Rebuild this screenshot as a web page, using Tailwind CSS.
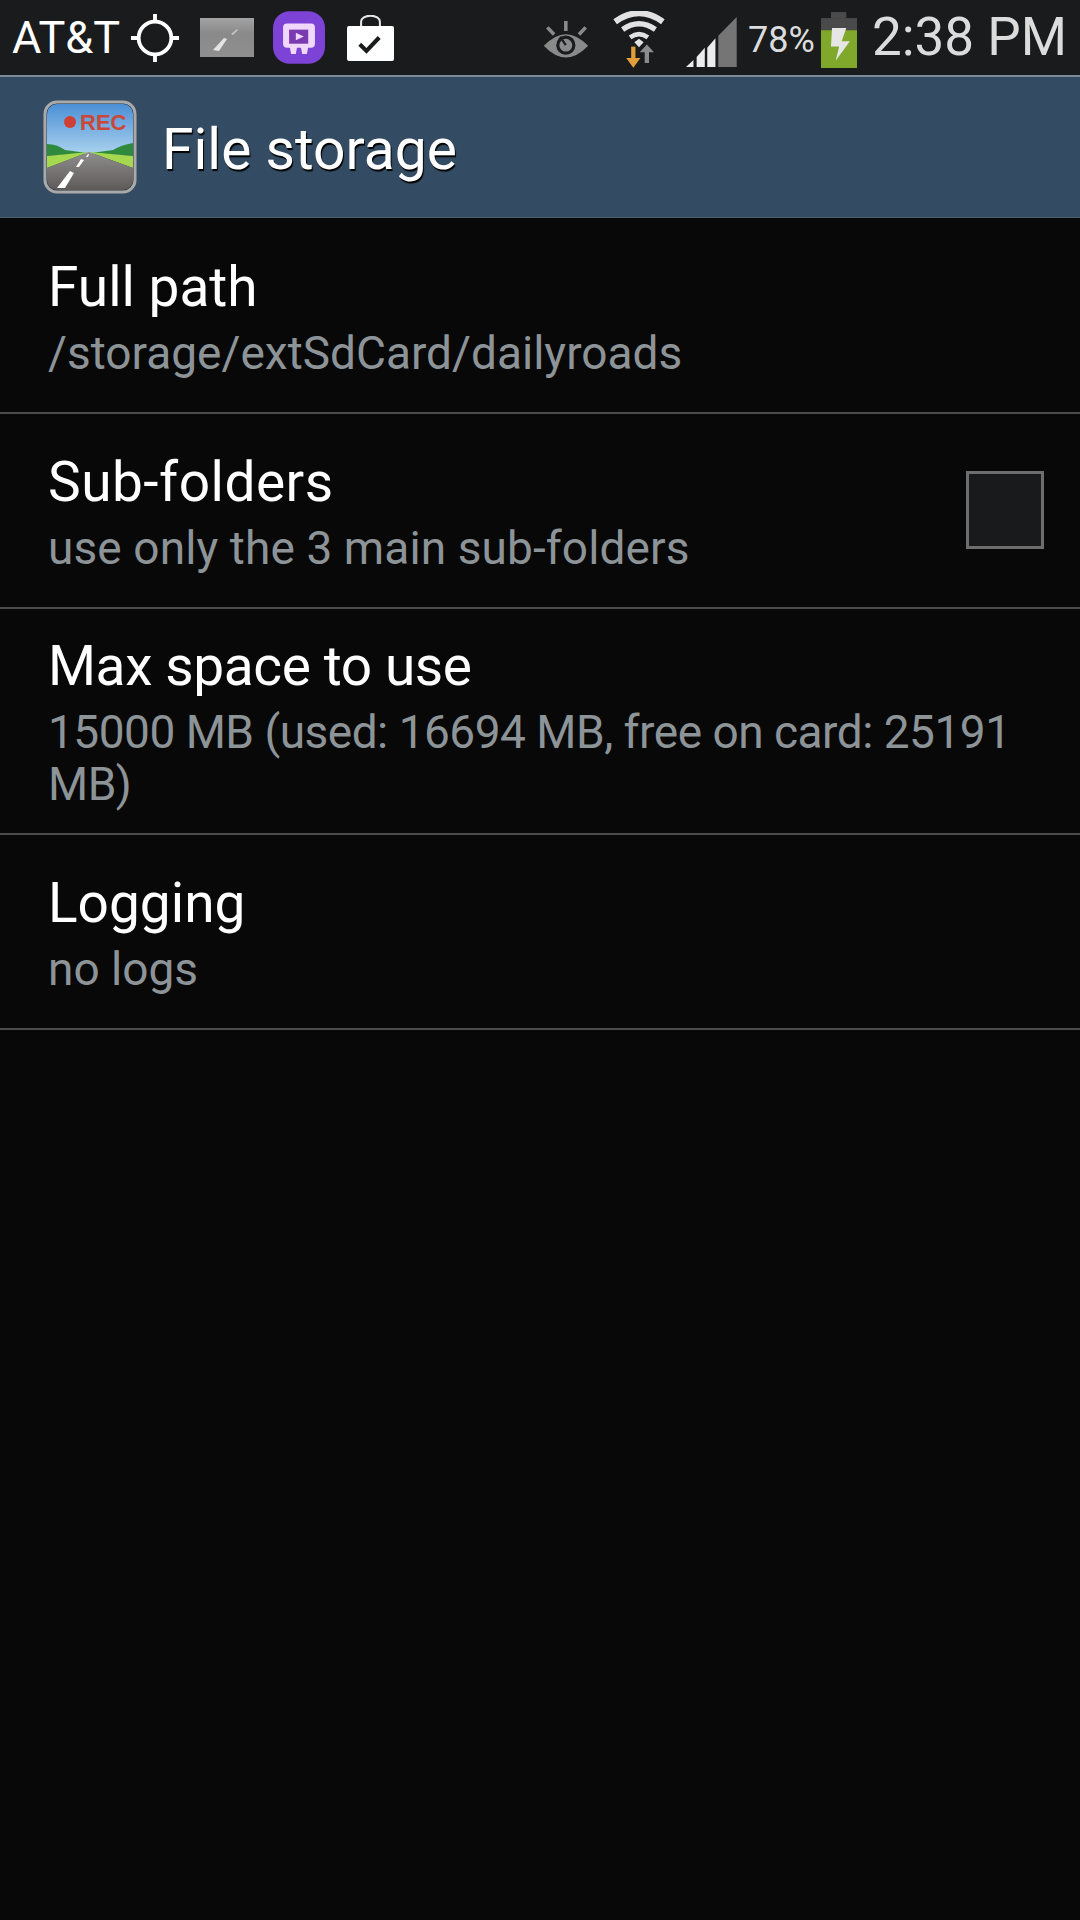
<!DOCTYPE html>
<html lang="en">

<head>
  <meta charset="UTF-8">
  <meta name="viewport" content="width=device-width, initial-scale=1.0">
  <title>File storage</title>
  <script src="https://cdn.jsdelivr.net/npm/@tailwindcss/browser@4"></script>
</head>

<body class="bg-[#080808] w-[1080px] h-[1920px] overflow-hidden font-['Roboto',sans-serif]">

  <!-- Status bar -->
  <div class="h-[75px] bg-[#1a1b1d] flex items-center">
    <span class="ml-[12px] w-[107px] text-[45px] leading-none text-white">AT&amp;T</span>
    <!-- GPS -->
    <svg class="ml-[11px]" width="50" height="50" viewBox="0 0 52 52" fill="none" stroke="#fff" stroke-width="4">
      <circle cx="26" cy="26" r="17" />
      <path d="M26 1v8M26 43v8M1 26h8M43 26h8" />
    </svg>
    <!-- Thumb -->
    <svg class="ml-[20px]" width="54" height="39" viewBox="0 0 54 39">
      <defs>
        <linearGradient id="thumb" x1="0" y1="0" x2="0" y2="1">
          <stop offset="0" stop-color="#a3a3a3" />
          <stop offset="0.4" stop-color="#8a8a8a" />
          <stop offset="1" stop-color="#8f8f8f" />
        </linearGradient>
      </defs>
      <rect width="54" height="39" fill="url(#thumb)" />
      <path d="M13 32 L24 20 L27 21 L19 33Z" fill="#e4e4e4" />
      <path d="M31 16 L37 11 L38 12 L33 17Z" fill="#c4c4c4" />
    </svg>
    <!-- Purple app -->
    <svg class="ml-[19px]" width="52" height="53" viewBox="820 33 155 157">
      <rect x="820" y="33" width="155" height="157" rx="50" fill="#7d42d6" />
      <rect x="850" y="70" width="95" height="72" rx="12" fill="#f0d8fa" />
      <rect x="868" y="88" width="57" height="42" fill="#7a3ab0" />
      <path d="M888 97l24 11.500-24 11.500z" fill="#f0d8fa" />
      <path d="M870 140h22l-4 21h-14zM903 140h22l-4 21h-14z" fill="#f0d8fa" />
    </svg>
    <!-- Shopping bag -->
    <svg class="ml-[22px]" width="47" height="46" viewBox="1040 35 140 137" fill="none">
      <path d="M1082 72V55a28 18 0 0 1 56 0v17" stroke="#e8e8e8" stroke-width="6" />
      <rect x="1040" y="68" width="140" height="104" rx="6" fill="#fff" />
      <path d="M1078 122l20 20 38-40" stroke="#1a1b1d" stroke-width="12" />
    </svg>

    <div class="ml-auto flex items-center h-full">
      <!-- Eye -->
      <svg width="46" height="38" viewBox="75 58 125 107" class="mr-[24px] mt-[5px]">
        <path d="M75 128 Q137 62 200 128 Q137 194 75 128Z" fill="#8a8a8a" />
        <circle cx="137" cy="126" r="27" fill="#1a1b1d" />
        <circle cx="137" cy="126" r="18" fill="#8a8a8a" />
        <path d="M137 126l-16-24" stroke="#1a1b1d" stroke-width="6" />
        <path d="M137 58v28M85 76l19 20M193 76l-19 20" stroke="#8a8a8a" stroke-width="10" />
      </svg>
      <!-- Wifi with arrows -->
      <svg width="52" height="57" viewBox="265 30 146 160" class="mr-[20px] mt-[3px]" fill="none">
        <path d="M271 60 Q338 12 405 60" stroke="#e2e2e2" stroke-width="17" />
        <path d="M292 82 Q338 50 384 82" stroke="#e2e2e2" stroke-width="15" />
        <path d="M313 104 Q338 86 363 104" stroke="#e2e2e2" stroke-width="13" />
        <path d="M325 118 L338 108 L351 118 L338 132Z" fill="#e2e2e2" />
        <path d="M360 176V140" stroke="#8c8c8c" stroke-width="12" />
        <path d="M340 146l20-22 20 22z" fill="#8c8c8c" />
        <path d="M322 166V130" stroke="#e19f3c" stroke-width="12" />
        <path d="M302 162l20 27 20-27z" fill="#e19f3c" />
      </svg>
      <!-- Signal -->
      <svg width="52" height="50" viewBox="465 47 145 141" class="mr-[11px] mt-[9px]">
        <path d="M467 188l21-20v20z" fill="#ececec" />
        <path d="M497 188v-28l23-26v54z" fill="#ececec" />
        <path d="M527 188v-54l23-27v81z" fill="#ececec" />
        <path d="M558 188v-88l52-53v141z" fill="#757575" />
      </svg>
      <span class="text-[36px] leading-none text-[#dcdcdc] mt-[4px]">78%</span>
      <!-- Battery -->
      <svg width="36" height="56" viewBox="837 33 101 157" class="ml-[6px] mt-[5px]">
        <rect x="865" y="33" width="43" height="17" fill="#4a4a4a" />
        <rect x="837" y="50" width="101" height="34" fill="#4a4a4a" />
        <rect x="837" y="84" width="101" height="106" fill="#80a92c" />
        <path d="M868 78h40l-13 37h23l-40 55 10-40h-23z" fill="#e6e6e6" />
      </svg>
      <span class="ml-[15px] mr-[13px] text-[53px] leading-none text-[#dcdcdc]">2:38 PM</span>
    </div>
  </div>

  <!-- Action bar -->
  <div class="h-[143px] bg-[#344c63] border-t-[2px] border-t-[#7c8b99] border-b border-b-[#4b5d6e] flex items-center">
    <svg class="ml-[43px]" width="94" height="94" viewBox="0 0 94 94">
      <defs>
        <linearGradient id="sky" x1="0" y1="0" x2="0" y2="1">
          <stop offset="0" stop-color="#4c8fd6" />
          <stop offset="1" stop-color="#a9d2ee" />
        </linearGradient>
        <linearGradient id="road" x1="0" y1="0" x2="0" y2="1">
          <stop offset="0" stop-color="#8e8e8e" />
          <stop offset="1" stop-color="#5f5a58" />
        </linearGradient>
        <clipPath id="clip">
          <rect x="4" y="4" width="86" height="86" rx="10" />
        </clipPath>
      </defs>
      <rect x="2" y="2" width="90" height="90" rx="12" fill="#27384a" stroke="#a9a9a9" stroke-width="3" />
      <g clip-path="url(#clip)">
        <rect x="4" y="4" width="86" height="50" fill="url(#sky)" />
        <path d="M4 44 Q14 44 22 50 L44 53 L4 56Z" fill="#2f8a3e" />
        <path d="M90 43 Q78 45 70 50 L48 53 L90 56Z" fill="#2f8a3e" />
        <path d="M4 56 L46 52 L4 68Z" fill="#a5d84f" />
        <path d="M90 56 L46 52 L90 68Z" fill="#a5d84f" />
        <path d="M4 68 L46 52 L90 68 V90 H4Z" fill="url(#road)" />
        <path d="M14 88 L27 71 L31 73 L22 88Z" fill="#fff" />
        <path d="M33 67 L38 59 L41 60 L36 67Z" fill="#fff" />
        <path d="M43 57 L45 54 L46 54 L45 57Z" fill="#fff" />
      </g>
      <circle cx="27" cy="22" r="6" fill="#cf4034" />
      <text x="37" y="30" font-family="Liberation Sans, sans-serif" font-weight="700" font-size="22" fill="#c9483a">REC</text>
    </svg>
    <span class="ml-[25px] mt-[5px] text-[57px] leading-none text-white [text-shadow:1px_2px_1px_#000000]">File storage</span>
  </div>

  <!-- Settings list -->
  <div class="flex flex-col mt-[1px]">
    <div class="h-[195px] border-b-[2px] border-[#4c4c4c] pl-[48px] pr-[36px] pt-[38px] flex flex-col">
      <span class="text-[55px] leading-[60px] text-white">Full path</span>
      <span class="text-[46px] leading-[52px] text-[#8d9498] mt-[10px]">/storage/extSdCard/dailyroads</span>
    </div>

    <div class="h-[195px] border-b-[2px] border-[#4c4c4c] pl-[48px] pr-[36px] pt-[38px] flex items-start justify-between">
      <div class="flex flex-col">
        <span class="text-[55px] leading-[60px] tracking-[0.5px] text-white">Sub-folders</span>
        <span class="text-[46px] leading-[52px] tracking-[0.1px] text-[#8d9498] mt-[10px]">use only the 3 main sub-folders</span>
      </div>
      <div class="w-[78px] h-[78px] mt-[19px] border-[3px] border-[#6d6d6d] bg-[#181a1c]"></div>
    </div>

    <div class="h-[226px] border-b-[2px] border-[#4c4c4c] pl-[48px] pr-[36px] pt-[27px] flex flex-col">
      <span class="text-[55px] leading-[60px] tracking-[-0.4px] text-white">Max space to use</span>
      <span class="text-[46px] leading-[52px] tracking-[-0.5px] text-[#8d9498] mt-[10px]">15000 MB (used: 16694 MB, free on card: 25191 MB)</span>
    </div>

    <div class="h-[195px] border-b-[2px] border-[#4c4c4c] pl-[48px] pr-[36px] pt-[38px] flex flex-col">
      <span class="text-[55px] leading-[60px] text-white">Logging</span>
      <span class="text-[46px] leading-[52px] text-[#8d9498] mt-[10px]">no logs</span>
    </div>
  </div>

</body>

</html>
